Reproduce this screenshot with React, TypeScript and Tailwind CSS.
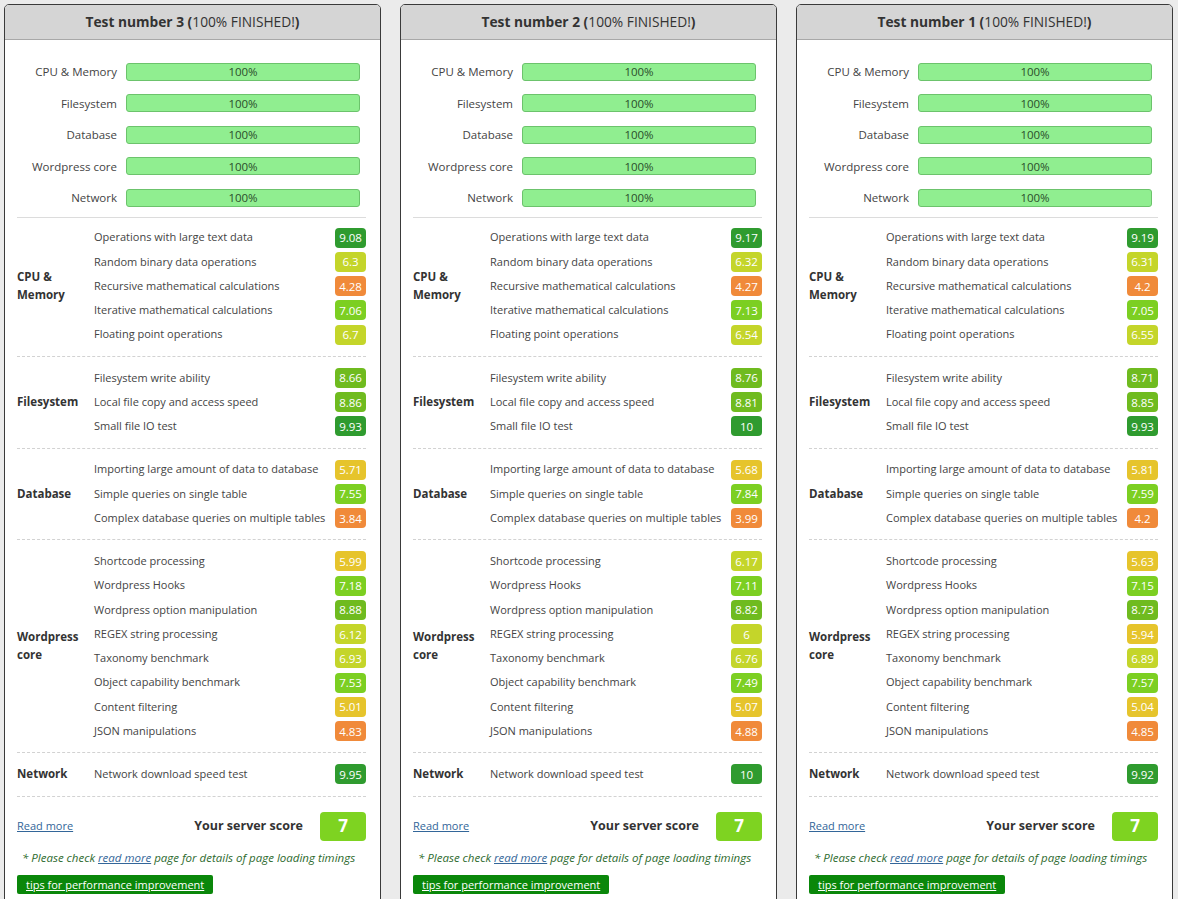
import React from "react";

type Row = [string, number];
type Section = { title: string; rows: Row[] };
type TestRun = { number: number; sections: Section[]; score: number };

const font = { fontFamily: '"Open Sans", "Noto Sans", sans-serif' };

const groups = ["CPU & Memory", "Filesystem", "Database", "Wordpress core", "Network"];

const names: Record<string, string[]> = {
  "CPU & Memory": [
    "Operations with large text data",
    "Random binary data operations",
    "Recursive mathematical calculations",
    "Iterative mathematical calculations",
    "Floating point operations",
  ],
  Filesystem: [
    "Filesystem write ability",
    "Local file copy and access speed",
    "Small file IO test",
  ],
  Database: [
    "Importing large amount of data to database",
    "Simple queries on single table",
    "Complex database queries on multiple tables",
  ],
  "Wordpress core": [
    "Shortcode processing",
    "Wordpress Hooks",
    "Wordpress option manipulation",
    "REGEX string processing",
    "Taxonomy benchmark",
    "Object capability benchmark",
    "Content filtering",
    "JSON manipulations",
  ],
  Network: ["Network download speed test"],
};

const makeRun = (number: number, values: number[][], score: number): TestRun => ({
  number,
  score,
  sections: groups.map((g, i) => ({
    title: g,
    rows: names[g].map((n, j) => [n, values[i][j]] as Row),
  })),
});

const runs: TestRun[] = [
  makeRun(
    3,
    [
      [9.08, 6.3, 4.28, 7.06, 6.7],
      [8.66, 8.86, 9.93],
      [5.71, 7.55, 3.84],
      [5.99, 7.18, 8.88, 6.12, 6.93, 7.53, 5.01, 4.83],
      [9.95],
    ],
    7
  ),
  makeRun(
    2,
    [
      [9.17, 6.32, 4.27, 7.13, 6.54],
      [8.76, 8.81, 10],
      [5.68, 7.84, 3.99],
      [6.17, 7.11, 8.82, 6, 6.76, 7.49, 5.07, 4.88],
      [10],
    ],
    7
  ),
  makeRun(
    1,
    [
      [9.19, 6.31, 4.2, 7.05, 6.55],
      [8.71, 8.85, 9.93],
      [5.81, 7.59, 4.2],
      [5.63, 7.15, 8.73, 5.94, 6.89, 7.57, 5.04, 4.85],
      [9.92],
    ],
    7
  ),
];

const badgeColor = (v: number) => {
  if (v >= 9) return "bg-[#2f9b2f]";
  if (v >= 8) return "bg-[#6fbb1f]";
  if (v >= 7) return "bg-[#7ccf22]";
  if (v >= 6) return "bg-[#c4d52a]";
  if (v >= 5) return "bg-[#e6c42c]";
  return "bg-[#f08a3a]";
};

function ProgressRow({ label }: { label: string }) {
  return (
    <div className="flex items-center h-[31.5px]">
      <div className="w-[109px] shrink-0 text-right pr-[9px] text-[11.5px] text-[#444]">{label}</div>
      <div className="flex-1 mr-[6px] h-[18px] rounded-[3px] bg-[#90ee90] border border-[#6cc36c] flex items-center justify-center text-[11.5px] text-[#2b4d2b]">
        100%
      </div>
    </div>
  );
}

function ScoreSection({ section, first }: { section: Section; first: boolean }) {
  return (
    <div
      className={`flex items-center py-[9px] border-b border-dashed border-[#d2d2d2] ${
        first ? "pt-[8px]" : ""
      }`}
    >
      <div className="w-[77px] shrink-0 text-[11.5px] font-bold text-[#333] leading-[18px] pr-2">
        {section.title}
      </div>
      <div className="flex-1 flex flex-col">
        {section.rows.map(([name, v]) => (
          <div key={name} className="flex items-center justify-between h-[24.25px]">
            <span className="text-[11px] text-[#444] whitespace-nowrap">{name}</span>
            <span
              className={`${badgeColor(v)} min-w-[31px] h-[20px] px-1 rounded-[4px] text-white text-[11.5px] flex items-center justify-center`}
            >
              {v}
            </span>
          </div>
        ))}
      </div>
    </div>
  );
}

function TestCard({ run }: { run: TestRun }) {
  return (
    <div className="w-[377px] shrink-0 bg-white border border-[#3a3a3a] rounded-t-[5px] overflow-hidden">
      <div className="h-[35px] bg-[#d5d5d5] border-b border-[#a8a8a8] flex items-center justify-center pt-[1px] text-[13.75px] text-[#333]">
        <span className="font-bold">Test number {run.number}&nbsp;(</span>
        <span>100% FINISHED!</span>
        <span className="font-bold">)</span>
      </div>
      <div className="pl-[12px] pr-[14px]">
        <div className="pt-[16px] pb-[3px] border-b border-[#dcdcdc]">
          {groups.map((g) => (
            <ProgressRow key={g} label={g} />
          ))}
        </div>
        <div>
          {run.sections.map((s, i) => (
            <ScoreSection key={s.title} section={s} first={i === 0} />
          ))}
        </div>
        <div className="flex items-center justify-between pt-[15px]">
          <a href="#" className="text-[11px] text-[#336699] underline">
            Read more
          </a>
          <div className="flex items-center gap-[17px]">
            <span className="text-[12.5px] font-bold text-[#333]">Your server score</span>
            <span className="w-[46px] h-[29px] rounded-[4px] bg-[#7ed321] text-white text-[17px] font-bold flex items-center justify-center">
              {run.score}
            </span>
          </div>
        </div>
        <p className="mt-[8px] pl-[5px] text-[11.5px] italic text-[#2d6a2d] whitespace-nowrap">
          * Please check{" "}
          <a href="#" className="underline text-[#336699]">
            read more
          </a>{" "}
          page for details of page loading timings
        </p>
        <div className="mt-[5px] mb-4">
          <a
            href="#"
            className="inline-block bg-[#0a870a] text-white text-[11px] underline px-[9px] h-[19px] leading-[19px] rounded-[2px]"
          >
            tips for performance improvement
          </a>
        </div>
      </div>
    </div>
  );
}

export default function App() {
  return (
    <div className="min-h-screen bg-[#ebebeb] pt-[4px] pl-[4px]" style={font}>
      <div className="flex gap-[19px]">
        {runs.map((r) => (
          <TestCard key={r.number} run={r} />
        ))}
      </div>
    </div>
  );
}
